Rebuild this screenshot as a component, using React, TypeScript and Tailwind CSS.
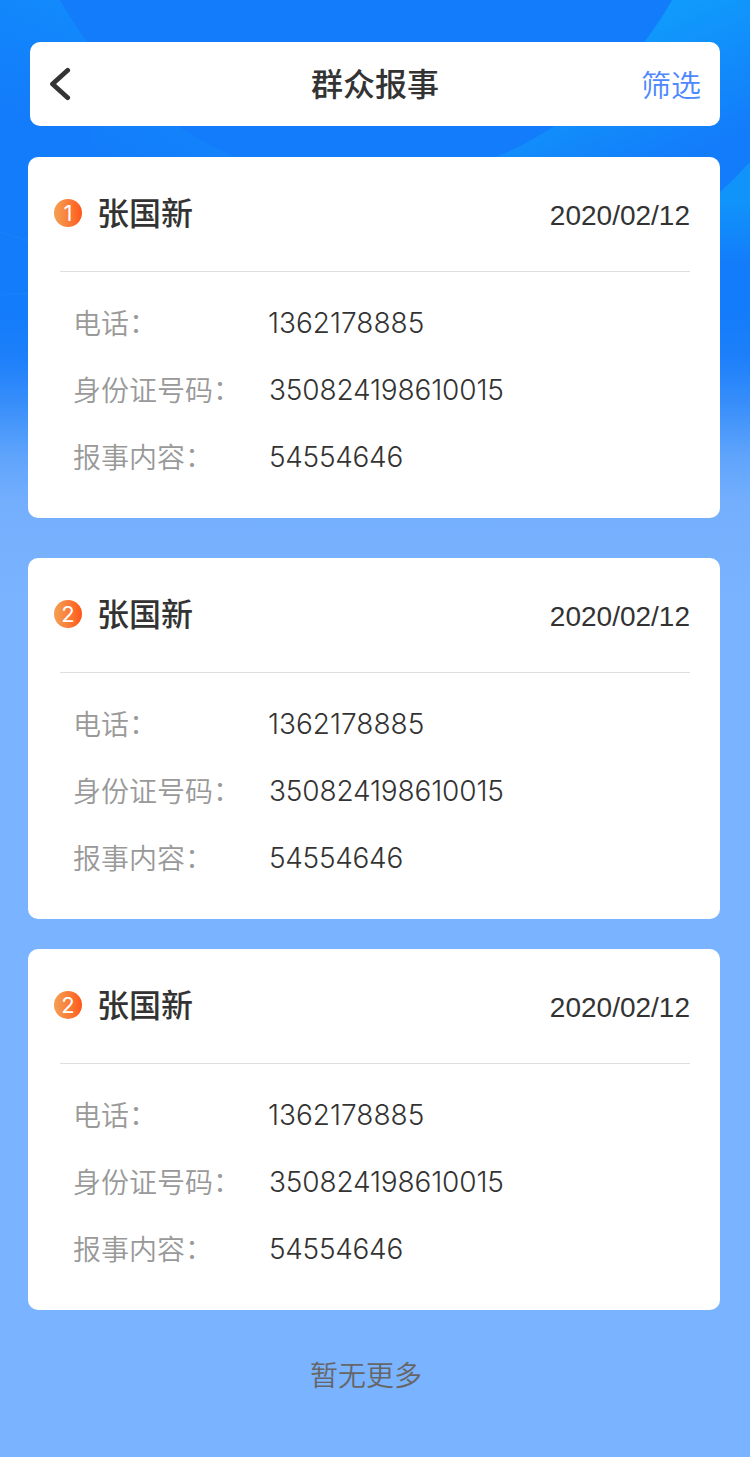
type Report = {
  no: number;
  name: string;
  date: string;
  phone: string;
  idCard: string;
  content: string;
};

const base: Omit<Report, 'no'> = {
  name: '张国新',
  date: '2020/02/12',
  phone: '1362178885',
  idCard: '350824198610015',
  content: '54554646',
};

const reports: Report[] = [
  { no: 1, ...base },
  { no: 2, ...base },
  { no: 2, ...base },
];

function Backdrop() {
  return (
    <svg className="absolute inset-0 -z-10" width="750" height="1457" viewBox="0 0 750 1457">
      <defs>
        <linearGradient id="page" x1="0" y1="0" x2="0" y2="600" gradientUnits="userSpaceOnUse">
          <stop offset="0" stopColor="#137cfa" />
          <stop offset="0.52" stopColor="#137cfa" />
          <stop offset="0.6" stopColor="#1e80fa" />
          <stop offset="0.68" stopColor="#3b90fa" />
          <stop offset="0.76" stopColor="#5fa4fc" />
          <stop offset="0.84" stopColor="#74affd" />
          <stop offset="1" stopColor="#7ab3ff" />
        </linearGradient>
        <linearGradient id="left" x1="90" y1="0" x2="40" y2="120" gradientUnits="userSpaceOnUse">
          <stop offset="0" stopColor="#118bfc" />
          <stop offset="1" stopColor="#137cfa" />
        </linearGradient>
        <linearGradient id="leftLow" x1="205" y1="120" x2="165" y2="190" gradientUnits="userSpaceOnUse">
          <stop offset="0" stopColor="#1284fb" />
          <stop offset="1" stopColor="#137cfa" />
        </linearGradient>
        <linearGradient id="right" x1="590" y1="50" x2="645" y2="175" gradientUnits="userSpaceOnUse">
          <stop offset="0" stopColor="#109afb" />
          <stop offset="1" stopColor="#137cfa" />
        </linearGradient>
        <linearGradient id="outer" x1="0" y1="200" x2="0" y2="265" gradientUnits="userSpaceOnUse">
          <stop offset="0" stopColor="#1094fa" />
          <stop offset="1" stopColor="#137cfa" />
        </linearGradient>
      </defs>
      <rect width="750" height="1457" fill="url(#page)" />
      <rect width="130" height="126" fill="url(#left)" />
      <rect x="90" y="126" width="276" height="40" fill="url(#leftLow)" />
      <rect x="366" width="384" height="200" fill="url(#right)" />
      <ellipse cx="366" cy="-186" rx="354.4" ry="368.6" fill="#137cfa" />
      <path d="M750 162 Q736 178 720 192 V265 H750 Z" fill="url(#outer)" />
      <path d="M0 231 L28 239 V242 L0 233 Z M0 294 L28 292 V295 L0 295 Z" fill="#1481fa" />
    </svg>
  );
}

function Row({ label, value, className }: { label: string; value: string; className: string }) {
  return (
    <div className="flex h-[67px] items-center">
      <span className="w-[196px] shrink-0 pb-0.5 text-[28px] font-[350] text-[#999]">
        {label}
        <span className="relative -top-px">：</span>
      </span>
      <span className={`pt-px font-[Inter,sans-serif] text-[28px] font-[350] text-[#333] ${className}`}>{value}</span>
    </div>
  );
}

function ReportCard({ report }: { report: Report }) {
  return (
    <section className="h-[361px] rounded-[10px] bg-white">
      <div className="ml-8 mr-[30px] flex h-[115px] items-center border-b border-[#dfdfdf] pb-0.5">
        <span className="-ml-1.5 flex size-7 items-center justify-center rounded-full bg-linear-to-r from-[#f2a052] to-[#ff5518] font-[Inter,sans-serif] text-[22px] leading-none text-white">
          {report.no}
        </span>
        <h2 className="ml-[15px] pb-1 text-[32px] leading-none font-medium text-[#333]">{report.name}</h2>
        <time className='ml-auto pt-1.5 font-["Liberation_Sans",sans-serif] text-[28px] leading-none text-[#333]'>
          {report.date}
        </time>
      </div>
      <div className="ml-[45px] pt-[17px]">
        <Row label="电话" value={report.phone} className="-ml-px" />
        <Row label="身份证号码" value={report.idCard} className="tracking-[-0.15px]" />
        <Row label="报事内容" value={report.content} className="tracking-[-0.3px]" />
      </div>
    </section>
  );
}

export default function App() {
  return (
    <div className='relative isolate h-[1457px] w-[750px] overflow-hidden pt-[42px] font-["Noto_Sans_CJK_SC",sans-serif]'>
      <Backdrop />
      <header className="mx-[30px] flex h-[84px] items-center justify-between rounded-[10px] bg-white px-5">
        <div className="w-[60px]">
          <svg width="22" height="34" viewBox="0 0 22 34" fill="none" stroke="#333" strokeWidth="4.8" strokeLinecap="round" strokeLinejoin="round">
            <path d="M17.7 3.3 L2.5 17 L17.7 30.7" />
          </svg>
        </div>
        <h1 className="pb-1 text-[32px] leading-none font-medium text-[#333]">群众报事</h1>
        <button className="w-[60px] pb-0.5 pl-px text-[30px] leading-none font-[350] whitespace-nowrap text-[#4d88ff]">筛选</button>
      </header>
      <main className="mt-[31px] ml-7 mr-[30px]">
        <ReportCard report={reports[0]} />
        <div className="mt-10 space-y-[30px]">
          {reports.slice(1).map((report, i) => (
            <ReportCard key={i} report={report} />
          ))}
        </div>
      </main>
      <p className="mt-[43px] -ml-[18px] text-center text-[28px] font-[350] text-[#666]">暂无更多</p>
    </div>
  );
}
